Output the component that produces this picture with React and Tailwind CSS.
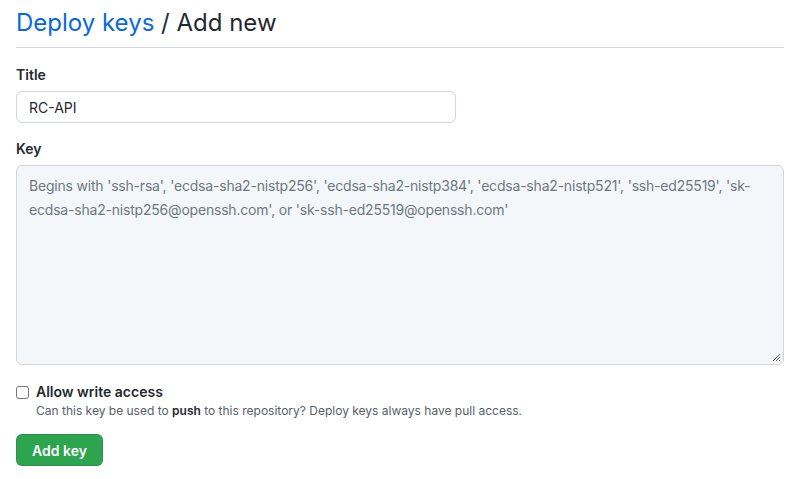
export default function App() {
  return (
    <div className="bg-white w-[809px] h-[479px] pl-4 pr-[25px] text-[#24292f]" style={{ fontFamily: 'Inter, "Liberation Sans", Arial, sans-serif' }}>
      <div className="pt-[7px] pb-[8px] border-b border-[#d0d7de] flex items-center">
        <h2 className="text-[24px] leading-[32px] font-normal">
          <a className="text-[#0969da]">Deploy keys</a> / Add new
        </h2>
      </div>
      <div className="mt-[17px]">
        <label className="block text-[14px] font-semibold leading-[20px]">Title</label>
        <div className="mt-[6px] w-[440px] h-[32px] border border-[#d0d7de] rounded-[6px] bg-white flex items-center px-[12px] text-[14px]">
          RC-API
        </div>
      </div>
      <div className="mt-[16px]">
        <label className="block text-[14px] font-semibold leading-[20px]">Key</label>
        <div className="relative mt-[6px] w-full h-[200px] border border-[#d0d7de] rounded-[6px] bg-[#f4f7fa] px-[12px] py-[8px] text-[14px] leading-[24px] tracking-[-0.2px] text-[#6e7781]">
          Begins with 'ssh-rsa', 'ecdsa-sha2-nistp256', 'ecdsa-sha2-nistp384', 'ecdsa-sha2-nistp521', 'ssh-ed25519', 'sk-ecdsa-sha2-nistp256@openssh.com', or 'sk-ssh-ed25519@openssh.com'
          <svg className="absolute right-[2px] bottom-[2px]" width="9" height="9" viewBox="0 0 9 9">
            <path d="M8 1 L1 8 M8 4 L4 8 M8 7 L7 8" stroke="#555" strokeWidth="1" />
          </svg>
        </div>
      </div>
      <div className="mt-[17px] flex items-start">
        <div className="mt-[4px] w-[13px] h-[13px] border border-[#767676] rounded-[3px] bg-white shrink-0"></div>
        <div className="ml-[7px]">
          <div className="text-[14px] font-semibold leading-[20px]">Allow write access</div>
          <div className="text-[12px] leading-[18px] text-[#57606a]">
            Can this key be used to <strong className="text-[#24292f] font-semibold">push</strong> to this repository? Deploy keys always have pull access.
          </div>
        </div>
      </div>
      <button className="mt-[14px] h-[32px] w-[87px] rounded-[6px] bg-[#2da44e] border border-[rgba(27,31,36,0.15)] text-white text-[14px] font-semibold">
        Add key
      </button>
    </div>
  );
}
